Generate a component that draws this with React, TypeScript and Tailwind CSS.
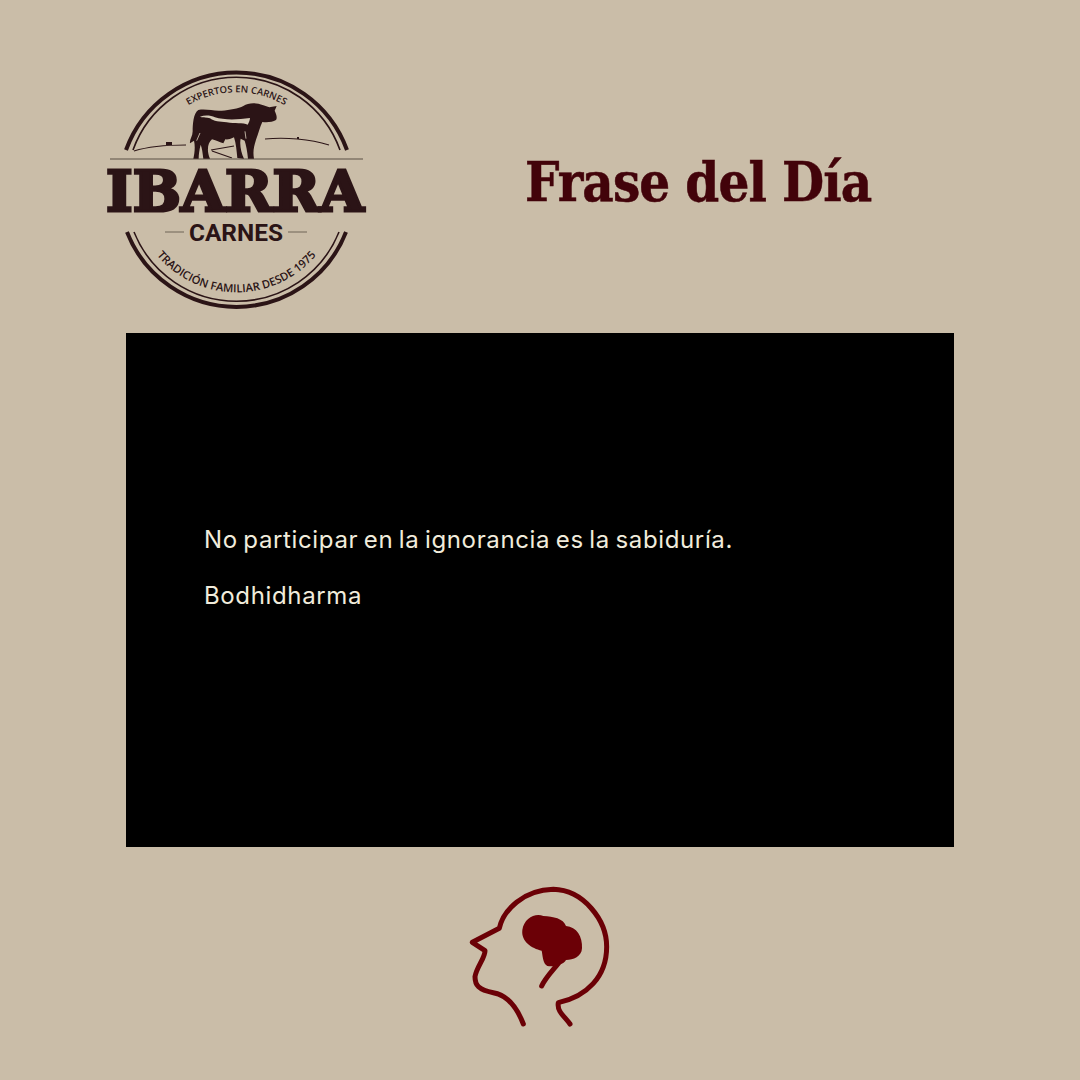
export default function App() {
  const ink = "#2b1416";
  return (
    <div className="w-[1080px] h-[1080px] bg-[#cabda8] flex flex-col overflow-hidden">
      <header className="h-[333px] flex items-start pt-[60px] pl-[95px]">
        <svg width="280" height="255" viewBox="95 60 280 255" className="shrink-0">
          <defs>
            <path id="topArc" d="M168 121 A 96 96 0 0 1 305 121" />
            <path id="botArc" d="M146.500 240.500 A 104 104 0 0 0 326.500 240.500" />
          </defs>
          <g fill="none" stroke={ink}>
            <path d="M126 150 A 117.500 117.500 0 0 1 347 150" strokeWidth="4" />
            <path d="M133 150 A 110 110 0 0 1 340 150" strokeWidth="1.600" />
            <path d="M127 232 A 117.500 117.500 0 0 0 346 232" strokeWidth="4" />
            <path d="M134 232 A 110.500 110.500 0 0 0 339 232" strokeWidth="1.600" />
            <path d="M134 151 C150 146 165 145 186 145" strokeWidth="1.100" />
            <path d="M265 139 C285 137 310 139 329 145" strokeWidth="1.100" />
            <path d="M211 150 L234 146 M212 151 L232 158" strokeWidth="1.200" />
          </g>
          <path d="M110 159 H363" stroke="#7f7466" strokeWidth="1.300" />
          <path d="M166 142 h6 v3 h-6z M297 137 h2 v2 h-2z" fill={ink} />
          <g transform="translate(180 98) scale(0.3333)">
            <path
              fill={ink}
              d="M55 36 C80 32 100 40 125 38 C150 36 175 32 190 24 C205 15 225 12 250 22 L268 28 L290 24 L284 38 C290 50 292 60 288 66 C278 72 262 74 247 72 C240 85 236 105 228 125 C222 145 218 160 222 182 L204 182 C202 160 198 140 194 128 L182 122 C178 140 184 165 192 182 L172 180 C170 160 168 135 162 118 C150 124 142 125 136 124 L130 136 C118 132 105 126 96 124 C82 135 80 160 90 182 L70 182 C68 165 66 150 62 140 C58 155 56 170 56 182 L40 182 C44 165 46 145 42 128 L30 136 C28 125 38 115 38 100 C38 80 40 45 55 36 Z"
            />
            <path
              fill="#d6cbb8"
              d="M60 56 C75 51 92 52 105 58 C130 66 170 66 210 60 C210 66 207 74 203 80 C190 74 165 78 140 73 C120 71 100 70 90 61 C80 57 70 60 60 56 Z"
            />
            <path d="M195 100 L198 122 M60 105 L50 128" stroke="#d6cbb8" strokeWidth="2.500" fill="none" />
          </g>
          <g fill={ink} fontFamily="'Open Sans', sans-serif" fontWeight="600">
            <text fontSize="9.500">
              <textPath href="#topArc" startOffset="50%" textAnchor="middle">
                EXPERTOS EN CARNES
              </textPath>
            </text>
            <text fontSize="11.200">
              <textPath href="#botArc" startOffset="50%" textAnchor="middle">
                TRADICIÓN FAMILIAR DESDE 1975
              </textPath>
            </text>
            <text
              x="106"
              y="210.500"
              fontFamily="'DejaVu Serif', serif"
              fontWeight="800"
              fontSize="56"
              stroke={ink}
              strokeWidth="3"
              textLength="258"
              lengthAdjust="spacingAndGlyphs"
            >
              IBARRA
            </text>
            <text
              x="189"
              y="241"
              fontFamily="'Roboto', sans-serif"
              fontWeight="700"
              fontSize="23"
              textLength="94"
              lengthAdjust="spacingAndGlyphs"
            >
              CARNES
            </text>
          </g>
          <path d="M165 232 H184 M288 232 H307" stroke="#6f6557" strokeWidth="1" />
        </svg>
        <h1 className="ml-[150px] mt-[84px] text-[#42030a] text-[54px] leading-[76px] font-bold tracking-[-0.9px] [font-stretch:condensed] [-webkit-text-stroke:0.5px_#42030a] whitespace-nowrap [font-family:'DejaVu_Serif_Condensed','DejaVu_Serif',serif]">
          Frase del Día
        </h1>
      </header>
      <main className="mx-[126px] h-[514px] bg-black flex flex-col justify-center pl-[78px] pb-[45px] gap-[22px] text-[24px] leading-[34px] text-[#f1ecdc] tracking-[0.64px] [word-spacing:-1.8px] [font-family:Inter,sans-serif]">
        <p>No participar en la ignorancia es la sabiduría.</p>
        <p>Bodhidharma</p>
      </main>
      <footer className="flex justify-center pt-[33px]">
        <svg width="160" height="150" viewBox="0 0 480 450" fill="none" stroke="#6b0006" strokeWidth="15" strokeLinecap="round" strokeLinejoin="round">
          <path d="M190 432 C170 380 140 345 100 338 C55 330 45 315 45 290 C50 260 75 235 75 212 L37 187 L118 145 C130 90 190 30 280 28 C370 30 440 120 440 200 C440 290 380 350 295 368 C290 395 315 410 330 432" />
          <path d="M245 318 C255 295 275 275 295 250" />
          <path
            fill="#6b0006"
            stroke="none"
            d="M187 150 C192 115 225 98 250 108 C280 110 310 115 318 138 C350 140 368 170 366 205 C365 230 340 240 318 240 C310 255 280 262 262 258 C248 250 248 225 245 212 C215 205 183 185 187 150 Z"
          />
        </svg>
      </footer>
    </div>
  );
}
